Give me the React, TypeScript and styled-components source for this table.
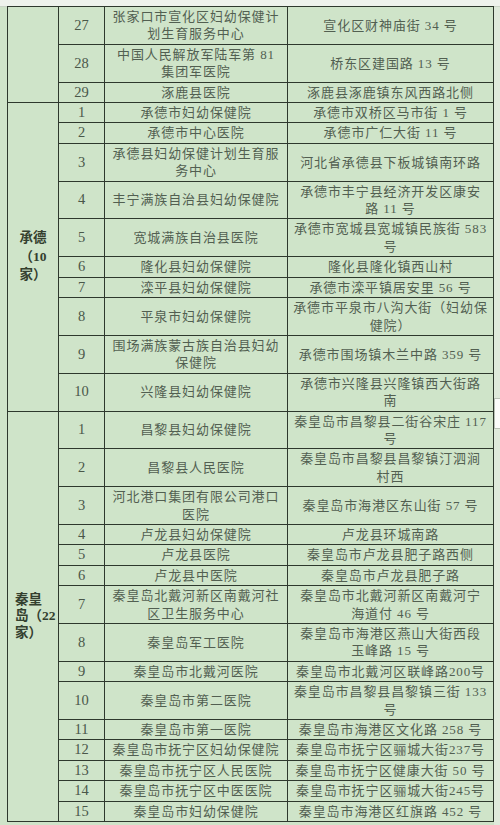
import React from "react";
import styled, { createGlobalStyle } from "styled-components";

const GlobalStyle = createGlobalStyle`
  html, body { margin: 0; padding: 0; }
  body {
    width: 500px;
    height: 825px;
    overflow: hidden;
    background: #cfe4c9;
    font-family: "Liberation Serif", "Noto Sans CJK SC", serif;
  }
`;

const Page = styled.div`
  width: 500px;
  height: 825px;
  display: flex;
  flex-direction: column;
  background: #cfe4c9;
`;

const TopStrip = styled.div`
  height: 6px;
  flex: none;
  background: #eef2ec;
  border-bottom: 1px solid #c9d3c6;
`;

const Body = styled.div`
  display: flex;
  flex: 1;
`;

const TableArea = styled.div`
  padding-left: 7px;
  background: #cfe4c9;
`;

const RightGutter = styled.div`
  flex: 1;
  background: #dfeadb;
  padding-top: 391px;
`;

const Tab = styled.div`
  width: 6px;
  height: 29px;
  background: #fbfcfa;
  border: 1px solid #b9c2b6;
  border-right: none;
`;

const Table = styled.table`
  border-collapse: collapse;
  table-layout: fixed;
  width: 487px;
  margin-top: -1px;
  color: #525f51;
`;

const Cell = styled.td`
  border: 1px solid #2e382d;
  padding: 1px 2px;
  text-align: center;
  vertical-align: middle;
  font-size: 13px;
  line-height: 17.4px;
  letter-spacing: 0.9px;
  white-space: nowrap;
  overflow: hidden;
`;

const NumCell = styled(Cell)`
  font-size: 14.5px;
  letter-spacing: 0;
  color: #4a5749;
`;

const GroupCell = styled.td<{ $align: "left" | "center"; $lh: number }>`
  border: 1px solid #2e382d;
  padding: 0 0 0 ${(p) => (p.$align === "left" ? "7px" : "0")};
  text-align: ${(p) => p.$align};
  vertical-align: middle;
  font-size: 13.5px;
  line-height: ${(p) => p.$lh}px;
  font-weight: bold;
  color: #34402f;
  white-space: nowrap;
  overflow: hidden;
`;

const Line = styled.span`
  display: block;
`;

type Row = { n: string; name: string[]; addr: string[] };
type Group = { label: string[]; align: "left" | "center"; lh: number; rows: Row[] };

const r = (n: string, name: string | string[], addr: string | string[]): Row => ({
  n,
  name: Array.isArray(name) ? name : [name],
  addr: Array.isArray(addr) ? addr : [addr],
});

const groups: Group[] = [
  {
    label: [],
    align: "center",
    lh: 17,
    rows: [
      r("27", ["张家口市宣化区妇幼保健计", "划生育服务中心"], "宣化区财神庙街 34 号"),
      r("28", ["中国人民解放军陆军第 81", "集团军医院"], "桥东区建国路 13 号"),
      r("29", "涿鹿县医院", "涿鹿县涿鹿镇东风西路北侧"),
    ],
  },
  {
    label: ["承德", "（10", "家）"],
    align: "center",
    lh: 18.5,
    rows: [
      r("1", "承德市妇幼保健院", "承德市双桥区马市街 1 号"),
      r("2", "承德市中心医院", "承德市广仁大街 11 号"),
      r("3", ["承德县妇幼保健计划生育服", "务中心"], "河北省承德县下板城镇南环路"),
      r("4", "丰宁满族自治县妇幼保健院", ["承德市丰宁县经济开发区康安", "路 11 号"]),
      r("5", "宽城满族自治县医院", ["承德市宽城县宽城镇民族街 583", "号"]),
      r("6", "隆化县妇幼保健院", "隆化县隆化镇西山村"),
      r("7", "滦平县妇幼保健院", "承德市滦平镇居安里 56 号"),
      r("8", "平泉市妇幼保健院", ["承德市平泉市八沟大街（妇幼保", "健院）"]),
      r("9", ["围场满族蒙古族自治县妇幼", "保健院"], "承德市围场镇木兰中路 359 号"),
      r("10", "兴隆县妇幼保健院", ["承德市兴隆县兴隆镇西大街路", "南"]),
    ],
  },
  {
    label: ["秦皇", "岛（22", "家）"],
    align: "left",
    lh: 16.5,
    rows: [
      r("1", "昌黎县妇幼保健院", ["秦皇岛市昌黎县二街谷宋庄 117", "号"]),
      r("2", "昌黎县人民医院", ["秦皇岛市昌黎县昌黎镇汀泗涧", "村西"]),
      r("3", ["河北港口集团有限公司港口", "医院"], "秦皇岛市海港区东山街 57 号"),
      r("4", "卢龙县妇幼保健院", "卢龙县环城南路"),
      r("5", "卢龙县医院", "秦皇岛市卢龙县肥子路西侧"),
      r("6", "卢龙县中医院", "秦皇岛市卢龙县肥子路"),
      r("7", ["秦皇岛北戴河新区南戴河社", "区卫生服务中心"], ["秦皇岛市北戴河新区南戴河宁", "海道付 46 号"]),
      r("8", "秦皇岛军工医院", ["秦皇岛市海港区燕山大街西段", "玉峰路 15 号"]),
      r("9", "秦皇岛市北戴河医院", "秦皇岛市北戴河区联峰路200号"),
      r("10", "秦皇岛市第二医院", ["秦皇岛市昌黎县昌黎镇三街 133", "号"]),
      r("11", "秦皇岛市第一医院", "秦皇岛市海港区文化路 258 号"),
      r("12", "秦皇岛市抚宁区妇幼保健院", "秦皇岛市抚宁区骊城大街237号"),
      r("13", "秦皇岛市抚宁区人民医院", "秦皇岛市抚宁区健康大街 50 号"),
      r("14", "秦皇岛市抚宁区中医医院", "秦皇岛市抚宁区骊城大街245号"),
      r("15", "秦皇岛市妇幼保健院", "秦皇岛市海港区红旗路 452 号"),
    ],
  },
];

const Lines: React.FC<{ items: string[] }> = ({ items }) => (
  <>
    {items.map((t, i) => (
      <Line key={i}>{t}</Line>
    ))}
  </>
);

export default function App() {
  return (
    <>
      <GlobalStyle />
      <Page>
        <TopStrip />
        <Body>
          <TableArea>
            <Table>
              <colgroup>
                <col style={{ width: 51 }} />
                <col style={{ width: 46 }} />
                <col style={{ width: 183 }} />
                <col style={{ width: 206 }} />
              </colgroup>
              <tbody>
                {groups.map((g, gi) =>
                  g.rows.map((row, ri) => (
                    <tr key={`${gi}-${ri}`}>
                      {ri === 0 && (
                        <GroupCell rowSpan={g.rows.length} $align={g.align} $lh={g.lh}>
                          <Lines items={g.label} />
                        </GroupCell>
                      )}
                      <NumCell>{row.n}</NumCell>
                      <Cell>
                        <Lines items={row.name} />
                      </Cell>
                      <Cell>
                        <Lines items={row.addr} />
                      </Cell>
                    </tr>
                  ))
                )}
              </tbody>
            </Table>
          </TableArea>
          <RightGutter>
            <Tab />
          </RightGutter>
        </Body>
      </Page>
    </>
  );
}
